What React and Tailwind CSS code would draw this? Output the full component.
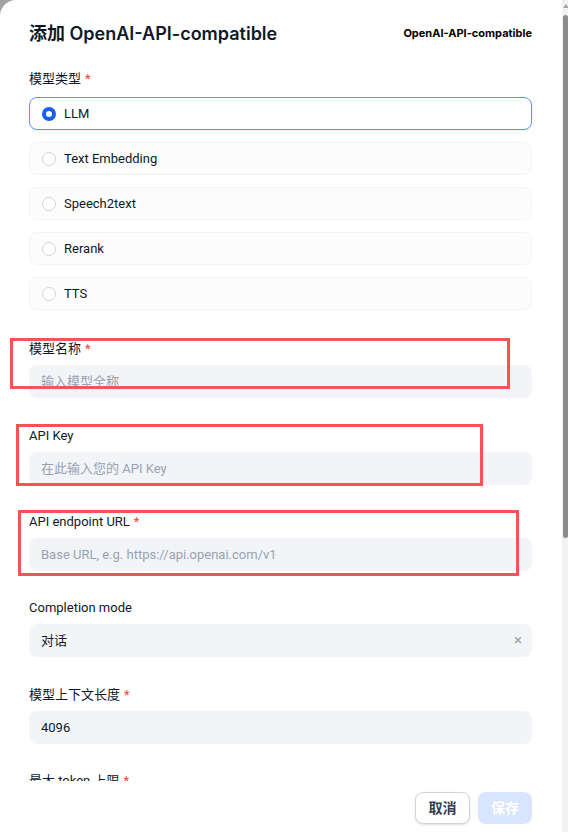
import React from "react";

const font = "font-['Roboto','Noto_Sans_CJK_SC',sans-serif]";

function Radio({ label, selected }) {
  return (
    <div
      className={
        "flex h-[33px] items-center rounded-lg px-3 " +
        (selected
          ? "border-[1.5px] border-[#5B93FF] bg-white shadow-[0_1px_2px_rgba(16,24,40,0.06)]"
          : "border border-[#F2F4F7] bg-[#FCFCFD]")
      }
    >
      {selected ? (
        <span className="box-border h-[14px] w-[14px] rounded-full border-[4px] border-[#155EEF] bg-white" />
      ) : (
        <span className="box-border h-[14px] w-[14px] rounded-full border border-[#D0D5DD] bg-white" />
      )}
      <span className="ml-2 text-[13px] text-[#101828]">{label}</span>
    </div>
  );
}

function Label({ children, required }) {
  return (
    <div className="flex h-5 items-center text-[13px] leading-5 text-[#101828]">
      {children}
      {required && <span className="ml-1 text-[#F04438]">*</span>}
    </div>
  );
}

function Field({ label, required, mt, children }) {
  return (
    <div className={mt}>
      <Label required={required}>{label}</Label>
      <div className="mt-[6px]">{children}</div>
    </div>
  );
}

function Input({ placeholder, value }) {
  return (
    <div className="flex h-[33px] items-center rounded-lg bg-[#F2F4F7] px-3 text-[13px]">
      {value ? (
        <span className="text-[#101828]">{value}</span>
      ) : (
        <span className="text-[#98A2B3]">{placeholder}</span>
      )}
    </div>
  );
}

export default function App() {
  return (
    <div className={"flex h-[832px] w-[568px] overflow-hidden bg-[#a3a3a3] " + font}>
      <div className="relative flex w-[562px] flex-col overflow-hidden rounded-tl-2xl bg-white">
        <div className="h-[781px] overflow-hidden pl-[29px] pr-[30px]">
          <div className="mt-[19px] flex h-7 items-center justify-between">
            <div className="font-['Inter','Noto_Sans_CJK_SC',sans-serif] text-[18px] font-semibold text-[#101828]">
              添加 OpenAI-API-compatible
            </div>
            <div className="font-['Inter',sans-serif] text-[11px] font-bold text-black">OpenAI-API-compatible</div>
          </div>

          <div className="mt-[22px]">
            <Label required>模型类型</Label>
          </div>
          <div className="mt-[8px] flex flex-col gap-3">
            <Radio label="LLM" selected />
            <Radio label="Text Embedding" />
            <Radio label="Speech2text" />
            <Radio label="Rerank" />
            <Radio label="TTS" />
          </div>

          <Field label="模型名称" required mt="mt-[29px]">
            <Input placeholder="输入模型全称" />
          </Field>
          <Field label="API Key" mt="mt-[28px]">
            <Input placeholder="在此输入您的 API Key" />
          </Field>
          <Field label="API endpoint URL" required mt="mt-[27px]">
            <Input placeholder="Base URL, e.g. https://api.openai.com/v1" />
          </Field>
          <Field label="Completion mode" mt="mt-[27px]">
            <div className="flex h-[33px] items-center justify-between rounded-lg bg-[#F2F4F7] pl-3 pr-[10px] text-[13px]">
              <span className="text-[#101828]">对话</span>
              <span className="text-[15px] leading-none text-[#98A2B3]">×</span>
            </div>
          </Field>
          <Field label="模型上下文长度" required mt="mt-[28px]">
            <Input value="4096" />
          </Field>
          <Field label="最大 token 上限" required mt="mt-[27px]">
            <Input placeholder="" />
          </Field>
        </div>

        <div className="flex flex-1 items-start justify-end gap-2 bg-white pl-[29px] pr-[30px] pt-[11px]">
          <button className="h-8 w-[55px] rounded-lg border border-[#D0D5DD] bg-white text-[14px] font-semibold text-[#344054] shadow-sm">
            取消
          </button>
          <button className="h-8 w-[54px] rounded-lg bg-[#D9E5FE] text-[14px] font-semibold text-white">
            保存
          </button>
        </div>

        <div className="absolute left-[10px] top-[338px] h-[51px] w-[500px] border-[3px] border-[#F55454]" />
        <div className="absolute left-[16px] top-[424px] h-[62px] w-[467px] border-[3px] border-[#F55454]" />
        <div className="absolute left-[18px] top-[510px] h-[66px] w-[501px] border-[3px] border-[#F55454]" />
      </div>

      <div className="flex w-[6px] flex-col bg-[#F1F1F1]">
        <div className="flex h-[12px] items-center justify-center pl-[1px]">
          <div className="h-0 w-0 border-x-[3px] border-b-[4px] border-x-transparent border-b-[#a3a3a3]" />
        </div>
        <div className="ml-[1px] mt-[3px] h-[523px] rounded-sm bg-[#8C8C8C]" />
      </div>
    </div>
  );
}
